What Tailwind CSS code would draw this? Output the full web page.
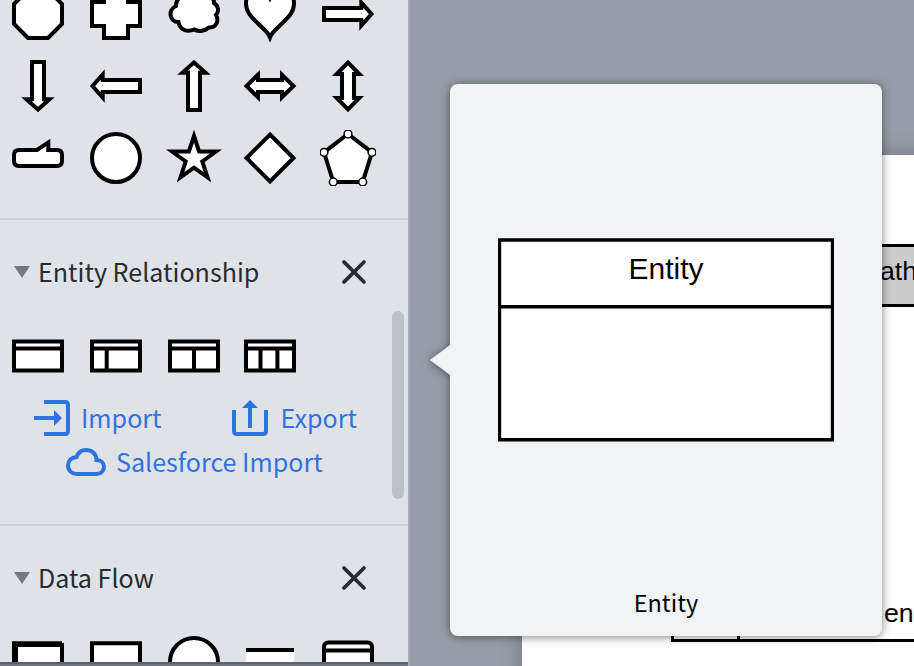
<!DOCTYPE html>
<html lang="en">
<head>
<meta charset="utf-8">
<title>Shape library</title>
<script src="https://cdn.jsdelivr.net/npm/@tailwindcss/browser@4"></script>
</head>
<body class="w-[914px] h-[666px] overflow-hidden font-['Noto_Sans_CJK_SC','Noto_Sans',sans-serif]">
<div class="relative flex w-[914px] h-[666px] overflow-hidden bg-[#979da8]">
  <aside class="relative flex flex-col w-[410px] h-[666px] shrink-0 overflow-hidden bg-[#dfe2e7] border-r-2 border-[#a6acb8] text-[#282c31]">
    <!-- Basic shapes -->
    <section class="h-[220px] shrink-0 border-b-2 border-[#cdd0d6]">
      <div class="grid grid-cols-[78px_78px_76px_78px_78px] auto-rows-[72px] pl-[10px] -mt-[14px] [&>svg]:size-14 [&>svg]:fill-white [&>svg]:stroke-black [&>svg]:stroke-4">
        <svg viewBox="0 0 56 56"><path d="M18 4H38L52 18V38L38 52H18L4 38V18Z"/></svg>
        <svg viewBox="0 0 56 56"><path d="M16 4H40V16H52V40H40V52H16V40H4V16H16Z"/></svg>
        <svg viewBox="0 0 56 56"><path d="M10 20C10 12 15 10 20 11C25 6 33 7 36 10C43 7 48 11 48 17C53 20 53 26 50 29C53 34 51 42 43 41.500C38 46 31 45.500 28 43.500C22 46 14 45 12.500 36C4 36.500 1 24 10 20Z"/></svg>
        <svg viewBox="0 0 56 56"><path d="M28 51.300C26 46 21 42.500 16 37.500C9 30.500 4 26 4 17.500C4 9 9 4 16 4C22 4 26 8 28 12C30 8 34 4 40 4C47 4 52 9 52 17.500C52 26 47 30.500 40 37.500C35 42.500 30 46 28 51.300Z"/></svg>
        <svg viewBox="0 0 56 56"><path d="M4 22H41.300V16.500L51.500 28L41.300 39.500V34H4Z"/></svg>

        <svg viewBox="0 0 56 56"><path d="M22 4H34V41.300H39.500L28 51.500L16.500 41.300H22Z"/></svg>
        <svg viewBox="0 0 56 56"><path d="M52 22H14.700V16.500L4.500 28L14.700 39.500V34H52Z"/></svg>
        <svg viewBox="0 0 56 56"><path d="M22 52H34V14.700H39.500L28 4.500L16.500 14.700H22Z"/></svg>
        <svg viewBox="0 0 56 56"><path d="M16 22H40V16.700L51.500 28L40 39.300V34H16V39.300L4.500 28L16 16.700Z"/></svg>
        <svg viewBox="0 0 56 56"><path d="M22 16V40H16.700L28 51.500L39.300 40H34V16H39.300L28 4.500L16.700 16Z"/></svg>

        <svg viewBox="0 0 56 56"><path d="M9 20H27L38.300 12.400V20H47Q52 20 52 25V31Q52 36 47 36H9Q4 36 4 31V25Q4 20 9 20Z"/></svg>
        <svg viewBox="0 0 56 56"><circle cx="28" cy="28" r="24"/></svg>
        <svg viewBox="0 0 56 56"><path stroke-miterlimit="10" d="M28 6L33.100 21.500H50L36.300 31.500L41.500 47.400L28 37.700L14.500 47.400L19.700 31.500L6 21.500H22.900Z"/></svg>
        <svg viewBox="0 0 56 56"><path d="M28 4.500L51.500 28L28 51.500L4.500 28Z"/></svg>
        <svg viewBox="0 0 56 56"><path d="M28 4L52 22.300L42.700 52H13.300L4 22.300Z"/><g stroke-width="1.500" class="stroke-[1.5px]"><circle cx="28" cy="4" r="3.900"/><circle cx="52" cy="22.300" r="3.900"/><circle cx="42.700" cy="52" r="3.900"/><circle cx="13.300" cy="52" r="3.900"/><circle cx="4" cy="22.300" r="3.900"/></g></svg>
      </div>
    </section>

    <!-- Entity relationship -->
    <section class="h-[306px] shrink-0 border-b-2 border-[#cdd0d6]">
      <header class="flex items-center h-[108px] pl-[14px] pr-[40px]">
        <svg class="w-4 h-3 mb-1 fill-[#727983]" viewBox="0 0 16 12"><path d="M0 0H16L8 12Z"/></svg>
        <h2 class="ml-2 mb-1 text-[25.1px] leading-none whitespace-nowrap grow">Entity Relationship</h2>
        <svg class="size-7 mb-1 shrink-0" viewBox="0 0 28 28" fill="none" stroke="#282c31" stroke-width="3.800" stroke-linecap="round"><path d="M4 4L24 24M24 4L4 24"/></svg>
      </header>
      <div class="grid grid-cols-[78px_78px_76px_78px] pl-[10px] h-14 [&>svg]:size-14 [&>svg]:fill-white [&>svg]:stroke-black [&>svg]:stroke-4">
        <svg viewBox="0 0 56 56"><path d="M4 13.500H52V42.500H4ZM4 20.500H52"/></svg>
        <svg viewBox="0 0 56 56"><path d="M4 13.500H52V42.500H4ZM4 20.500H52M18.700 20V42"/></svg>
        <svg viewBox="0 0 56 56"><path d="M4 13.500H52V42.500H4ZM4 20.500H52M28 20V42"/></svg>
        <svg viewBox="0 0 56 56"><path d="M4 13.500H52V42.500H4ZM4 20.500H52M18.500 20V42M35.400 20V42"/></svg>
      </div>
      <div class="flex flex-col mt-[12px] text-[#2f73e0] text-[25.1px] leading-none">
        <div class="flex items-center justify-between h-11 pl-[34px] pr-[51px]">
          <a class="flex items-center gap-[11px]"><svg class="size-9" viewBox="0 0 36 36" fill="none" stroke="currentColor" stroke-width="4"><path d="M10 2H31Q34 2 34 5V31Q34 34 31 34H10M0 18H21"/><path d="M20 10L28 18L20 26Z" fill="currentColor" stroke="none"/></svg>Import</a>
          <a class="flex items-center gap-[13px]"><svg class="size-9" viewBox="0 0 36 36" fill="none" stroke="currentColor" stroke-width="4"><path d="M2 10V31Q2 34 5 34H31Q34 34 34 31V10M18 28V6"/><path d="M10 8L18 0L26 8Z" fill="currentColor" stroke="none"/></svg>Export</a>
        </div>
        <a class="flex items-center gap-[10px] h-11 pl-[66px]"><svg class="w-10 h-7" viewBox="0 0 40 28" fill="none" stroke="currentColor" stroke-width="4"><path d="M10.500 26H30.500C35 26 38 22.500 38 19C38 15 35 12 30.500 12C30.500 6 26 2 20 2C15 2 12 5 10.500 9C5 9.500 2 13 2 17.500C2 22.500 6 26 10.500 26Z"/></svg>Salesforce Import</a>
      </div>
    </section>

    <!-- Data flow -->
    <section class="h-[136px] shrink-0 overflow-hidden">
      <header class="flex items-center h-[108px] pl-[14px] pr-[40px]">
        <svg class="w-4 h-3 mb-1 fill-[#727983]" viewBox="0 0 16 12"><path d="M0 0H16L8 12Z"/></svg>
        <h2 class="ml-2 mb-1 text-[25.1px] leading-none whitespace-nowrap grow">Data Flow</h2>
        <svg class="size-7 mb-1 shrink-0" viewBox="0 0 28 28" fill="none" stroke="#282c31" stroke-width="3.800" stroke-linecap="round"><path d="M4 4L24 24M24 4L4 24"/></svg>
      </header>
      <div class="grid grid-cols-[78px_78px_76px_78px_78px] pl-[10px] [&>svg]:size-14 [&>svg]:fill-white [&>svg]:stroke-black [&>svg]:stroke-4">
        <svg viewBox="0 0 56 56"><path d="M4 11H52V54H4Z"/><path d="M2 7.300H52V13H8V56H2Z" fill="black" stroke="none"/></svg>
        <svg viewBox="0 0 56 56"><path d="M4 9.300H52V50H4Z"/></svg>
        <svg viewBox="0 0 56 56"><circle cx="28" cy="28" r="24"/></svg>
        <svg viewBox="0 0 56 56"><path d="M4 16H52V50H4Z" stroke="none"/><path d="M4 16H52"/></svg>
        <svg viewBox="0 0 56 56"><rect x="4" y="8.500" width="48" height="44" rx="4"/><path d="M4 16.500H52"/></svg>
      </div>
    </section>
    <div class="h-1 shrink-0 bg-[#6f7681] border-t-2 border-[#5c636d]"></div>
    <div class="absolute left-[392px] top-[311px] w-3 h-[188px] rounded-full bg-[#bcc0ca]"></div>
  </aside>

  <!-- Document canvas -->
  <main class="relative grow overflow-hidden font-['Liberation_Sans',sans-serif] text-[26.7px] leading-none text-black">
    <div class="absolute left-[112px] top-[155px] w-[500px] h-[600px] bg-white shadow-[0_0_20px_rgba(70,74,84,0.45)]"></div>
    <div class="absolute left-[262px] top-[243.5px] w-[300px] h-[63px] bg-[#ccc] border-[3px] border-black"></div>
    <span class="absolute left-[470px] top-[258px]">ath</span>
    <div class="absolute left-[261px] top-[400px] w-[300px] h-[242px] border-[3px] border-t-0 border-black"><div class="w-[66px] h-full border-r-[3px] border-black"></div></div>
    <span class="absolute left-[474px] top-[600px]">en</span>
  </main>

  <!-- Shape preview -->
  <div class="absolute left-[450px] top-[84px] w-[432px] h-[552px] rounded-lg bg-[#f1f3f5] drop-shadow-[0_1px_5px_rgba(0,0,0,0.5)] flex flex-col items-center text-black">
    <svg class="absolute -left-5 top-[261px] w-[21px] h-[30px] fill-[#f1f3f5]" viewBox="0 0 21 30"><path d="M0 15L20 0H21V30H20Z"/></svg>
    <div class="relative mt-[154px] w-[336px] h-[204px] shrink-0">
      <svg class="absolute inset-0 size-full fill-white stroke-black" viewBox="0 0 336 204" stroke-width="3.400"><path d="M1.500 2H334.500V201.700H1.500ZM1.500 68.700H334.500"/></svg>
      <div class="relative h-[67px] text-center font-['Liberation_Sans',sans-serif] text-[30px] leading-[62px]">Entity</div>
    </div>
    <div class="mt-[148px] text-[23.5px] leading-[24px]">Entity</div>
  </div>
</div>
</body>
</html>
